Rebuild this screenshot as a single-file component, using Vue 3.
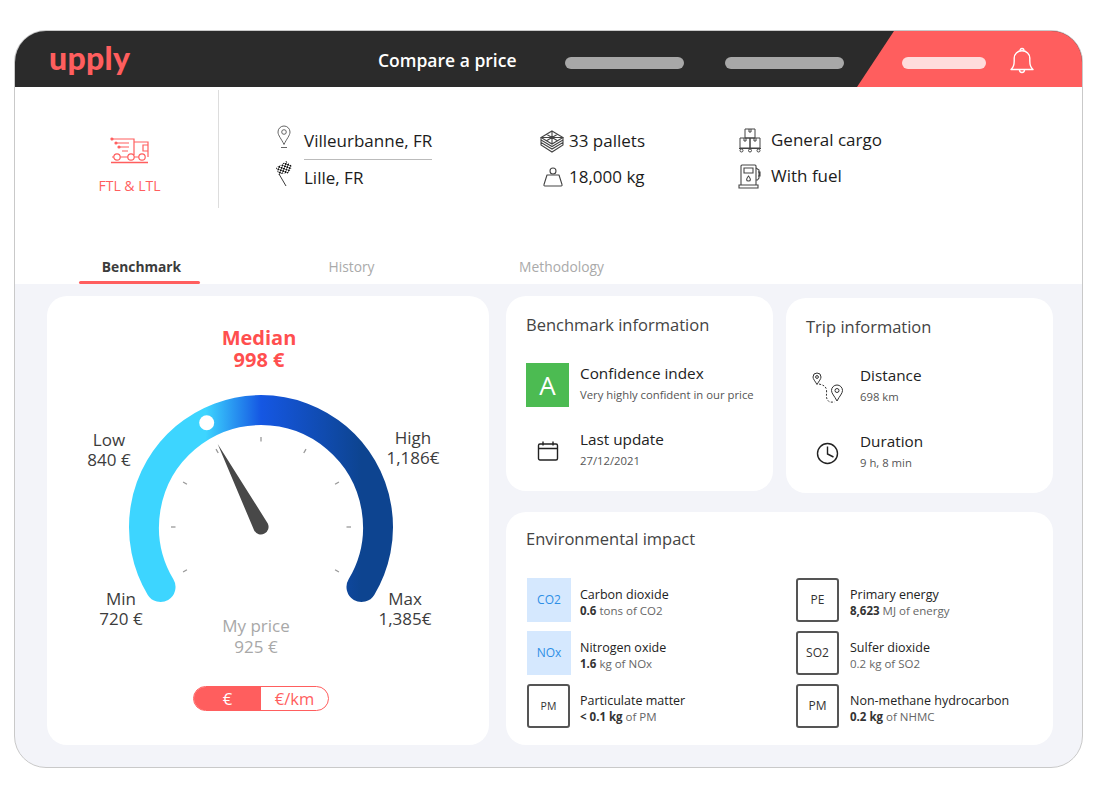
<template>
  <div class="window">
    <!-- top bar -->
    <header class="topbar">
      <div class="logo">upply</div>
      <div class="page-name">Compare a price</div>
      <div class="pill"></div>
      <div class="pill"></div>
      <div class="topbar-red">
        <div class="pill-light"></div>
        <svg class="bell" width="24" height="27" viewBox="0 0 24 27" fill="none" stroke="#fff" stroke-width="1.4">
          <path d="M1 22.500c2.500-2 3.200-4.500 3.200-8.500V11c0-4 3.200-7.200 7.800-7.200s7.800 3.200 7.800 7.200v3c0 4 .7 6.500 3.200 8.500z" stroke-linejoin="round" />
          <path d="M10 3.800c0-3 4-3 4 0M9.500 22.800c0 3.600 5 3.600 5 0" />
        </svg>
      </div>
    </header>

    <!-- search summary -->
    <section class="summary">
      <div class="mode">
        <svg width="40" height="27" viewBox="0 0 40 27" fill="none" stroke="#ff5e5e" stroke-width="1.200">
          <path d="M2 2h22v16M6 6h13M9 10h10M12 14h6" />
          <circle cx="2" cy="2" r="1" fill="#ff5e5e" />
          <circle cx="6" cy="6" r="1" fill="#ff5e5e" />
          <circle cx="9" cy="10" r="1" fill="#ff5e5e" />
          <path d="M24 5h14v15M33 8h5v6h-5zM2 20h1.800M10.200 20h7.600M24.200 20h4.600" />
          <circle cx="7" cy="20" r="3.200" />
          <circle cx="21" cy="20" r="3.200" />
          <circle cx="32" cy="20" r="3.200" />
          <path d="M1 25.500h37" stroke-width="1.500" />
        </svg>
        <span>FTL &amp; LTL</span>
      </div>

      <div class="col col-route">
        <div class="row route-from">
          <svg class="ico-pin" width="14" height="23" viewBox="0 0 14 23" fill="none" stroke="#555" stroke-width="0.9">
            <path d="M7 1a6 6 0 0 0-6 6c0 3.500 3.500 7 6 12.500 2.500-5.500 6-9 6-12.500a6 6 0 0 0-6-6z" />
            <circle cx="7" cy="7" r="2.300" />
            <path d="M4 22.500h6" />
          </svg>
          <span class="route-text">Villeurbanne, FR</span>
        </div>
        <div class="row route-to">
          <svg class="ico-flag" width="18" height="27" viewBox="0 0 18 27">
            <defs>
              <pattern id="chk" width="3.600" height="3.600" patternUnits="userSpaceOnUse" patternTransform="rotate(-25)">
                <rect width="3.600" height="3.600" fill="#fff" />
                <rect width="1.800" height="1.800" fill="#111" />
                <rect x="1.800" y="1.800" width="1.800" height="1.800" fill="#111" />
              </pattern>
            </defs>
            <path d="M1 8C4 5 7 5 11 1l6 5c-1 4-3 6-5 8-3-1-6 0-8 1z" fill="url(#chk)" />
            <path d="M4 14l7 12" stroke="#222" stroke-width="0.9" fill="none" />
          </svg>
          <span class="route-text">Lille, FR</span>
        </div>
      </div>

      <div class="col col-load">
        <div class="row">
          <svg width="24" height="23" viewBox="0 0 24 23" fill="none" stroke="#444" stroke-width="1.100">
            <path d="M12 1l11 6.500-11 6.500L1 7.500zM12 1v13M1 7.500h22M6.500 4.300l11 6.500M17.500 4.300l-11 6.500" />
            <path d="M1 7.500v2.500l11 6.500 11-6.500V7.500M1 10v2.500l11 6.500 11-6.500V10M1 12.500V15l11 7 11-7v-2.500" />
          </svg>
          <span>33 pallets</span>
        </div>
        <div class="row row-weight">
          <svg width="20" height="20" viewBox="0 0 20 20" fill="none" stroke="#444" stroke-width="1.100">
            <circle cx="10" cy="4" r="3" />
            <path d="M4 8h12l3 9.500a1 1 0 0 1-1 1.500H2a1 1 0 0 1-1-1.500z" stroke-linejoin="round" />
          </svg>
          <span>18,000 kg</span>
        </div>
      </div>

      <div class="col col-cargo">
        <div class="row">
          <svg width="24" height="25" viewBox="0 0 24 25" fill="none" stroke="#444" stroke-width="1">
            <path d="M7 1h10v9H7zM11 1v3h2V1M2 10h10v10H2zM12 10h10v10H12zM6 10v3h2v-3M16 10v3h2v-3" />
            <path d="M1 20.500h22" />
            <circle cx="3.500" cy="22.500" r="1.500" />
            <circle cx="12" cy="22.500" r="1.500" />
            <circle cx="20.500" cy="22.500" r="1.500" />
          </svg>
          <span>General cargo</span>
        </div>
        <div class="row">
          <svg width="24" height="25" viewBox="0 0 24 25" fill="none" stroke="#444" stroke-width="1.100">
            <path d="M3 21V2a1 1 0 0 1 1-1h13a1 1 0 0 1 1 1v19M1 21h19v3H1z" />
            <path d="M6 4h9v5H6z" />
            <path d="M10.500 12c-2.500 3-2.500 5 0 5s2.500-2 0-5z" />
            <path d="M18 4l3 2v8l-1.500 2H18M20 8h2v4h-2" />
          </svg>
          <span>With fuel</span>
        </div>
      </div>
    </section>

    <!-- tabs -->
    <nav class="tabs">
      <div v-for="(tab, index) in tabs" :key="tab" class="tab" :class="{ active: index === 0 }">
        <div class="tab-label">{{ tab }}</div>
        <div class="tab-line"></div>
      </div>
    </nav>

    <main class="content">
      <!-- gauge -->
      <section class="card gauge-card">
        <div class="median">Median<br />998 €</div>
        <svg class="gauge" width="442" height="300" viewBox="47 375 442 300">
          <defs>
            <linearGradient id="arc" gradientUnits="userSpaceOnUse" x1="129" y1="0" x2="393" y2="0">
              <stop offset="0.29" stop-color="#3dd5ff" />
              <stop offset="0.5" stop-color="#1557e3" />
              <stop offset="0.88" stop-color="#0d4490" />
            </linearGradient>
          </defs>
          <path d="M160.500 587A117 117 0 1 1 361.500 587" fill="none" stroke="url(#arc)" stroke-width="30" stroke-linecap="round" />
          <circle cx="206.700" cy="422.700" r="7.500" fill="#fff" />
          <line
            v-for="t in ticks"
            :key="t.deg"
            :x1="t.x1" :y1="t.y1" :x2="t.x2" :y2="t.y2"
            stroke="#999" stroke-width="1.300"
          />
          <path d="M217.700 444L267.800 523.400A7.700 7.700 0 0 1 254.200 530.600Z" fill="#484848" />
          <text
            v-for="l in gaugeLabels"
            :key="l.text"
            class="gauge-label"
            :class="{ muted: l.muted }"
            :x="l.x" :y="l.y"
            text-anchor="middle"
          >{{ l.text }}</text>
        </svg>
        <div class="toggle">
          <div class="toggle-on">€</div>
          <div class="toggle-off">€/km</div>
        </div>
      </section>

      <div class="right">
        <div class="right-top">
          <section class="card info-card">
            <h2>Benchmark information</h2>
            <div class="info-row">
              <div class="grade">A</div>
              <div>
                <div class="info-title">Confidence index</div>
                <div class="info-sub">Very highly confident in our price</div>
              </div>
            </div>
            <div class="info-row">
              <div class="info-ico">
                <svg width="22" height="20" viewBox="0 0 22 20" fill="none" stroke="#222" stroke-width="1.400">
                  <rect x="1.500" y="3" width="19" height="16" rx="1.500" />
                  <path d="M1.500 7.500h19M6 .5v4M16 .5v4" />
                </svg>
              </div>
              <div>
                <div class="info-title">Last update</div>
                <div class="info-sub">27/12/2021</div>
              </div>
            </div>
          </section>

          <section class="card info-card trip-card">
            <h2>Trip information</h2>
            <div class="info-row">
              <div class="info-ico">
                <svg class="ico-route" width="33" height="31" viewBox="0 0 33 31" fill="none" stroke="#333" stroke-width="1">
                  <path d="M6 1a4 4 0 0 0-4 4c0 2 2 4 4 7.500C8 9 10 7 10 5a4 4 0 0 0-4-4z" />
                  <circle cx="6" cy="5" r="1.400" />
                  <path d="M26 13a5.500 5.500 0 0 0-5.500 5.500c0 3 3 5.500 5.500 10.500 2.500-5 5.500-7.500 5.500-10.500A5.500 5.500 0 0 0 26 13z" />
                  <circle cx="26" cy="18.500" r="2" />
                  <path d="M8 12c4 1 7 2 7.500 6s-1 7 1 10 5 2 7 2" stroke-dasharray="2 1.500" />
                </svg>
              </div>
              <div>
                <div class="info-title">Distance</div>
                <div class="info-sub">698 km</div>
              </div>
            </div>
            <div class="info-row">
              <div class="info-ico">
                <svg width="23" height="23" viewBox="0 0 23 23" fill="none" stroke="#222" stroke-width="1.400">
                  <circle cx="11.500" cy="11.500" r="10" />
                  <path d="M11.500 4.500v7.500l6 3" />
                </svg>
              </div>
              <div>
                <div class="info-title">Duration</div>
                <div class="info-sub">9 h, 8 min</div>
              </div>
            </div>
          </section>
        </div>

        <section class="card env-card">
          <h2>Environmental impact</h2>
          <div class="env-grid">
            <div v-for="item in impacts" :key="item.name" class="env-item">
              <div class="env-box" :class="{ blue: item.blue, small: item.small }">{{ item.code }}</div>
              <div class="env-text">
                <div class="env-name">{{ item.name }}</div>
                <div class="env-val"><b v-if="item.value">{{ item.value }}</b> {{ item.unit }}</div>
              </div>
            </div>
          </div>
        </section>
      </div>
    </main>
  </div>
</template>

<script setup>
const tabs = ['Benchmark', 'History', 'Methodology']

// tick marks every 30deg round the dial centre
const ticks = [180, 150, 120, 90, 60, 30, 0, -30, -150].map((deg) => {
  const a = (deg * Math.PI) / 180
  return {
    deg,
    x1: 261 + 90 * Math.cos(a),
    y1: 527 - 90 * Math.sin(a),
    x2: 261 + 85.500 * Math.cos(a),
    y2: 527 - 85.500 * Math.sin(a)
  }
})

const gaugeLabels = [
  { text: 'Low', x: 109, y: 446 },
  { text: '840 €', x: 109, y: 466 },
  { text: 'High', x: 413, y: 444 },
  { text: '1,186€', x: 413, y: 464 },
  { text: 'Min', x: 121, y: 605 },
  { text: '720 €', x: 121, y: 625 },
  { text: 'Max', x: 405, y: 605 },
  { text: '1,385€', x: 405, y: 625 },
  { text: 'My price', x: 256, y: 632, muted: true },
  { text: '925 €', x: 256, y: 653, muted: true }
]

// listed row by row, two columns
const impacts = [
  { code: 'CO2', blue: true, name: 'Carbon dioxide', value: '0.6', unit: 'tons of CO2' },
  { code: 'PE', name: 'Primary energy', value: '8,623', unit: 'MJ of energy' },
  { code: 'NOx', blue: true, name: 'Nitrogen oxide', value: '1.6', unit: 'kg of NOx' },
  { code: 'SO2', name: 'Sulfer dioxide', value: '', unit: '0.2 kg of SO2' },
  { code: 'PM', small: true, name: 'Particulate matter', value: '< 0.1 kg', unit: 'of PM' },
  { code: 'PM', name: 'Non-methane hydrocarbon', value: '0.2 kg', unit: 'of NHMC' }
]
</script>

<style>
html, body {
  background: #fff;
}
</style>

<style scoped>
.window {
  box-sizing: border-box;
  width: 1069px;
  height: 738px;
  margin: 30px 0 0 14px;
  border: 1px solid #c9c9c9;
  border-radius: 32px;
  overflow: hidden;
  background: #f3f4f9;
  font-family: "Open Sans", "Noto Sans", sans-serif;
  color: #222;
}

.topbar {
  display: flex;
  align-items: center;
  height: 56px;
  background: #2b2b2b;
}
.logo {
  flex: none;
  width: 329px;
  margin-left: 34px;
  font-family: Lato, sans-serif;
  font-weight: 900;
  font-size: 32px;
  line-height: 40px;
  letter-spacing: 0.3px;
  margin-top: -2px;
  color: #ff5e5e;
}
.page-name {
  flex: none;
  width: 187px;
  margin-top: 2px;
  color: #fff;
  font-size: 17.500px;
  font-weight: 600;
}
.pill {
  flex: none;
  width: 119px;
  height: 12px;
  margin-top: 7px;
  border-radius: 6px;
  background: #a8a8a8;
}
.pill + .pill {
  margin-left: 41px;
}
.topbar-red {
  display: flex;
  flex: none;
  align-items: center;
  align-self: stretch;
  width: 225px;
  margin-left: auto;
  background: #ff5e5e;
  clip-path: polygon(37px 0, 100% 0, 100% 100%, 0 100%);
}
.pill-light {
  width: 84px;
  height: 12px;
  margin-top: 7px;
  margin-left: 45px;
  border-radius: 6px;
  background: #ffdcdc;
}
.bell {
  margin-left: 24px;
  margin-top: 3px;
}

.summary {
  display: flex;
  height: 168px;
  background: #fff;
}
.mode {
  display: flex;
  flex: none;
  flex-direction: column;
  align-items: center;
  box-sizing: border-box;
  width: 204px;
  height: 118px;
  margin-top: 3px;
  padding-top: 47px;
  padding-left: 26px;
  border-right: 1px solid #ddd;
  color: #ff5e5e;
  font-size: 14px;
}
.mode span {
  margin-top: 12px;
}
.col {
  display: flex;
  flex-direction: column;
  gap: 12px;
  padding-top: 42px;
  font-size: 17px;
  line-height: 24px;
  color: #1c1c1c;
}
.row {
  display: flex;
  align-items: center;
  height: 24px;
}
.col-route {
  width: 263px;
  margin-left: 58px;
}
.route-text {
  margin-left: 13px;
}
.route-from .route-text {
  position: relative;
}
.route-from .route-text::after {
  content: "";
  position: absolute;
  left: 0;
  right: 0;
  bottom: -7px;
  height: 1px;
  background: #bbb;
}
.route-to .route-text {
  margin-top: 2px;
}
.ico-pin {
  margin-top: -9px;
}
.ico-flag {
  margin-left: -2px;
  margin-right: -2px;
  margin-top: -8px;
}
.col-load {
  width: 198px;
}
.col-load span {
  margin-left: 5px;
}
.row-weight svg {
  margin-left: 3px;
}
.row-weight span {
  margin-left: 6px;
}
.col-cargo {
  margin-top: -1px;
}
.col-cargo span {
  margin-left: 9px;
}

.tabs {
  display: flex;
  gap: 89px;
  height: 29px;
  padding-left: 64px;
  background: #fff;
}
.tab {
  width: 121px;
  padding-top: 2px;
  text-align: center;
  font-size: 13.800px;
  color: #aaa;
}
.tab-label {
  padding-left: 4px;
  line-height: 20px;
}
.tab-line {
  height: 3px;
  margin-top: 4px;
  border-radius: 2px;
}
.tab.active {
  color: #3c3c3c;
  font-weight: 700;
}
.tab.active .tab-line {
  background: #ff5e5e;
}

.content {
  display: flex;
  gap: 17px;
  padding: 12px 0 0 32px;
}
.card {
  box-sizing: border-box;
  border-radius: 20px;
  background: #fff;
}
.gauge-card {
  display: flex;
  flex-direction: column;
  align-items: center;
  width: 442px;
  height: 449px;
  padding-top: 31px;
}
.median {
  box-sizing: border-box;
  width: 442px;
  padding-right: 18px;
  text-align: center;
  font-size: 20px;
  line-height: 22px;
  font-weight: 700;
  color: #ff4f4f;
}
.gauge {
  display: block;
  flex: none;
  margin-top: 4px;
}
.gauge-label {
  font-size: 17px;
  fill: #3c3c3c;
}
.gauge-label.muted {
  fill: #a8a8a8;
}
.toggle {
  display: flex;
  flex: none;
  box-sizing: border-box;
  width: 136px;
  height: 25px;
  margin-top: 11px;
  margin-right: 14px;
  border: 1px solid #ff5e5e;
  border-radius: 13px;
  overflow: hidden;
  font-size: 16.500px;
  line-height: 23px;
  text-align: center;
}
.toggle-on {
  flex: 1;
  background: #ff5e5e;
  color: #fff;
}
.toggle-off {
  flex: 1;
  color: #ff5e5e;
}

.right {
  width: 547px;
}
.right-top {
  display: flex;
  gap: 13px;
}
.info-card {
  width: 267px;
  height: 195px;
  padding: 17px 10px 0 20px;
}
.trip-card {
  margin-top: 2px;
}
h2 {
  margin: 0;
  font-size: 16.500px;
  line-height: 24px;
  font-weight: 400;
  color: #444;
}
.info-row {
  display: flex;
  gap: 11px;
  height: 44px;
  margin-top: 22px;
}
h2 + .info-row {
  margin-top: 26px;
}
.grade {
  width: 43px;
  height: 44px;
  background: #4cbb52;
  color: #fff;
  font-size: 26px;
  line-height: 44px;
  text-align: center;
}
.info-ico {
  display: flex;
  align-items: center;
  justify-content: center;
  width: 43px;
  height: 44px;
}
.info-title {
  font-size: 15.300px;
  line-height: 20px;
  color: #222;
}
.info-sub {
  margin-top: 2px;
  font-size: 11.300px;
  line-height: 20px;
  color: #555;
}
.env-card {
  height: 233px;
  margin-top: 19px;
  padding: 15px 20px 0;
}
.env-grid {
  display: grid;
  grid-template-columns: 269px 1fr;
  row-gap: 9px;
  margin-top: 27px;
  padding-left: 1px;
}
.env-item {
  display: flex;
  align-items: center;
  gap: 10px;
}
.env-item:nth-child(even) {
  gap: 11px;
}
.env-text {
  padding-top: 5px;
}
.env-box {
  box-sizing: border-box;
  width: 43px;
  height: 44px;
  border: 2px solid #555;
  border-radius: 3px;
  font-size: 12px;
  line-height: 40px;
  text-align: center;
  color: #333;
}
.env-box.small {
  font-size: 10.500px;
}
.env-box.blue {
  width: 44px;
  margin-right: -1px;
  border: 0;
  border-radius: 0;
  background: #d5e8fe;
  color: #2d8fe6;
  line-height: 44px;
}
.env-name {
  font-size: 12.500px;
  line-height: 16px;
  color: #222;
}
.env-val {
  font-size: 11.500px;
  line-height: 16px;
  color: #666;
}
.env-val b {
  color: #333;
  font-weight: 700;
}
</style>
